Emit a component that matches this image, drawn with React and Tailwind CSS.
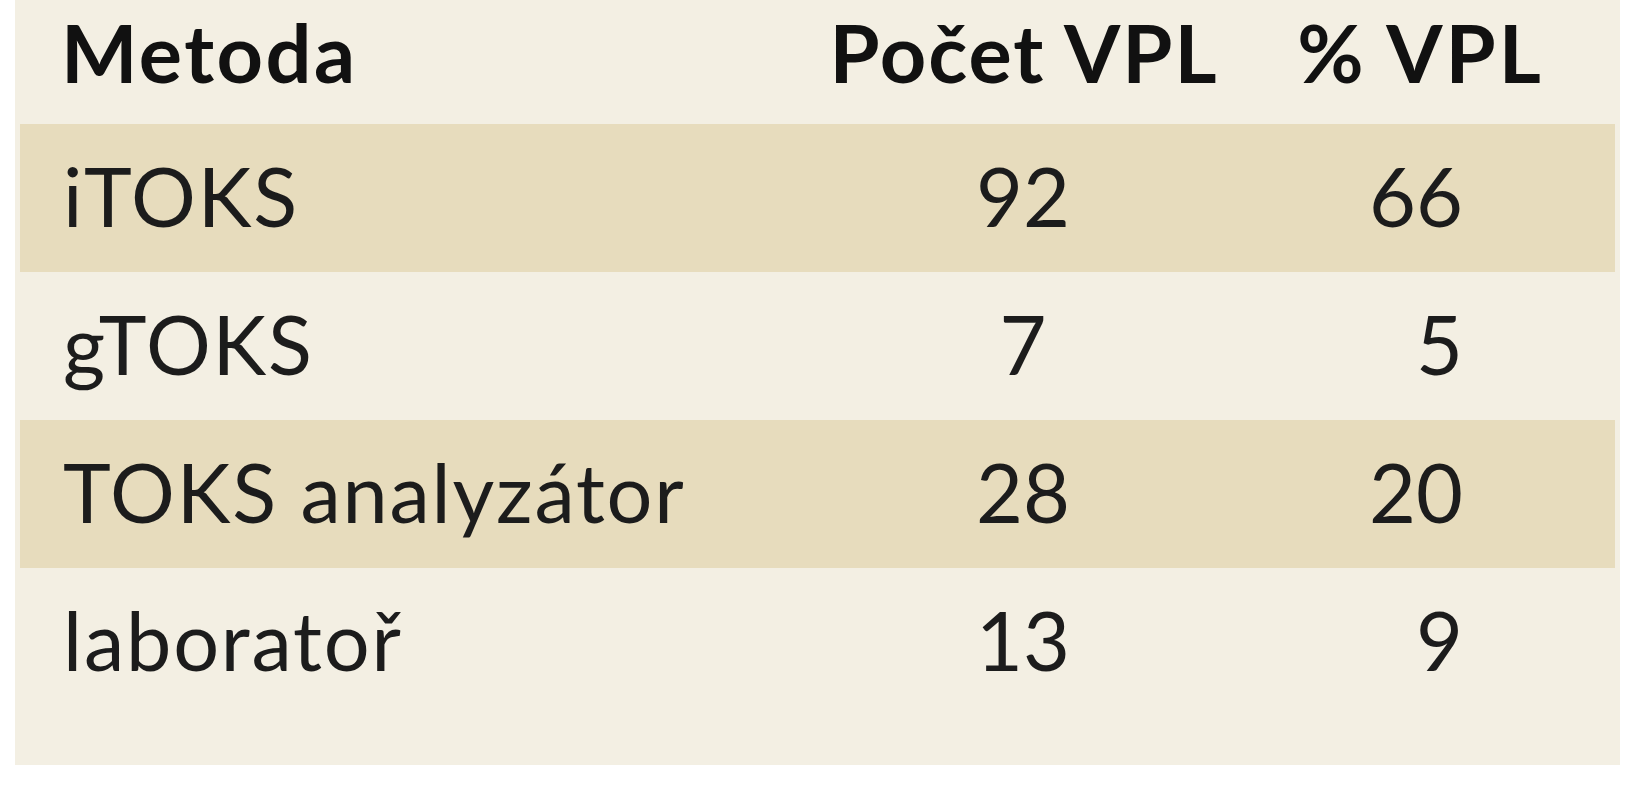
export default function App() {
  const rows = [
    { m: "iTOKS", n: "92", p: "66", striped: true },
    { m: "gTOKS", n: "7", p: "5", striped: false },
    { m: "TOKS analyzátor", n: "28", p: "20", striped: true },
    { m: "laboratoř", n: "13", p: "9", striped: false },
  ];
  return (
    <div className="w-full h-[800px] bg-white" style={{ fontFamily: "Lato, 'Noto Sans', sans-serif" }}>
      <div className="ml-[15px] mr-[5px] h-[765px] bg-[#f3efe3] px-[5px]">
        <div className="grid grid-cols-[803px_400px_1fr] h-[124px] leading-[103px] text-[81px] font-bold text-[#111]">
          <div className="pl-[41px] tracking-[2.5px]">Metoda</div>
          <div className="text-center tracking-[2px] pl-[2px]">Počet VPL</div>
          <div className="text-center tracking-[3px] pl-[3px]">% VPL</div>
        </div>
        {rows.map((r) => (
          <div
            key={r.m}
            className={
              r.striped
                ? "grid grid-cols-[803px_400px_1fr] h-[148px] leading-[144px] text-[81px] text-[#1c1c1c] bg-[#e7dcbd]"
                : "grid grid-cols-[803px_400px_1fr] h-[148px] leading-[144px] text-[81px] text-[#1c1c1c]"
            }
          >
            <div className="pl-[43px] whitespace-nowrap tracking-[1.8px]">{r.m}</div>
            <div className="text-center">{r.n}</div>
            <div className="text-right pr-[152px]">{r.p}</div>
          </div>
        ))}
      </div>
    </div>
  );
}
